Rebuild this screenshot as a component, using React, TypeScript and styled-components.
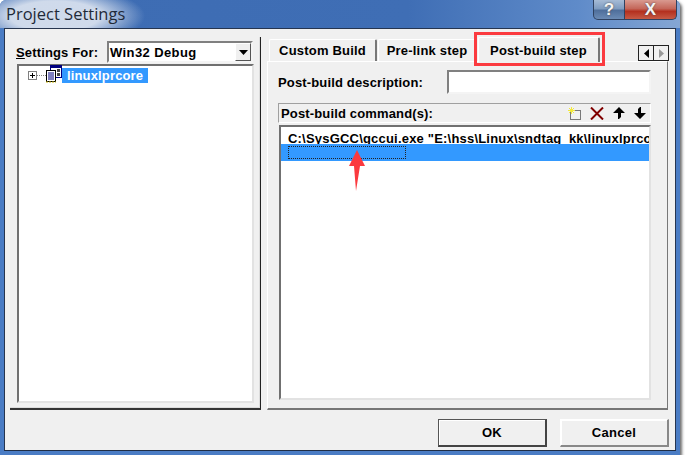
import styled, { createGlobalStyle } from 'styled-components';

const GlobalStyle = createGlobalStyle`
    html, body {
        margin: 0;
        padding: 0;
        background: #ffffff;
        overflow: hidden;
    }
    * {
        box-sizing: border-box;
    }
`;

const dialogFont = `"Liberation Sans", Arial, sans-serif`;

const Frame = styled.div`
    position: relative;
    width: 680px;
    height: 455px;
    display: flex;
    flex-direction: column;
    border-radius: 6px 6px 0 0;
    padding: 0 4px 4px 4px;
    background: #4a7cc4;
    box-shadow: 2px 2px 3px rgba(60, 60, 60, 0.75);
    font-family: ${dialogFont};
    color: #000000;
`;

const TitleBar = styled.div`
    height: 28px;
    margin: 0 -4px;
    padding-left: 6px;
    flex-shrink: 0;
    display: flex;
    justify-content: space-between;
    align-items: flex-start;
    border-radius: 6px 6px 0 0;
    background:
        radial-gradient(ellipse 90px 30px at 55px 16px, rgba(215, 224, 238, 0.95) 50%, rgba(215, 224, 238, 0) 100%),
        linear-gradient(90deg, #3d6cb3 0%, #3f6eb5 60%, #5f8bc9 85%, #85a6d4 100%);
`;

const TitleText = styled.div`
    font-family: "Open Sans", sans-serif;
    font-size: 16.5px;
    line-height: 28px;
    color: #1f2a38;
`;

const CaptionButtons = styled.div`
    display: flex;
    margin-right: 3px;
`;

const CaptionButton = styled.div<{ $close?: boolean }>`
    width: ${(p) => (p.$close ? 52 : 32)}px;
    height: 20px;
    display: flex;
    align-items: center;
    justify-content: center;
    border: 1px solid #2f4160;
    border-top: none;
    border-left-width: ${(p) => (p.$close ? 0 : 1)}px;
    border-radius: ${(p) => (p.$close ? '0 0 5px 0' : '0 0 0 5px')};
    font-family: ${dialogFont};
    font-weight: bold;
    color: #f4f4f4;
    font-size: ${(p) => (p.$close ? 17 : 17)}px;
    line-height: 19px;
    text-shadow: 0 0 2px #444444;
    background: ${(p) =>
        p.$close
            ? 'linear-gradient(180deg, #d99a90 0%, #c4675a 45%, #b4301f 60%, #c65a45 100%)'
            : 'linear-gradient(180deg, #a6bbd6 0%, #7f9cc0 45%, #4f6f9c 55%, #6b8bb5 100%)'};
`;

const Client = styled.div`
    flex: 1;
    display: flex;
    flex-direction: column;
    border: 1px solid #26354f;
    border-bottom-color: #1f2d45;
    background: #f0f0f0;
    padding: 8px 6px 0 5px;
`;

const Panes = styled.div`
    height: 373px;
    display: grid;
    grid-template-columns: 251px 401px;
    column-gap: 6px;
`;

const LeftPane = styled.div`
    display: flex;
    flex-direction: column;
    padding: 4px 7px 5px 6px;
    border-right: 1px solid #222222;
    border-bottom: 2px solid #333333;
    box-shadow: inset -1px -1px 0 #dcdcdc;
`;

const SettingsRow = styled.div`
    height: 22px;
    flex-shrink: 0;
    display: flex;
    align-items: center;
    justify-content: space-between;
`;

const FieldLabel = styled.label`
    font-size: 13px;
    font-weight: bold;
    letter-spacing: 0.15px;
    white-space: nowrap;
`;

const Sunken = styled.div`
    background: #ffffff;
    border: 2px solid;
    border-color: #808080 #f4f4f4 #f4f4f4 #808080;
`;

const Combo = styled(Sunken)`
    width: 146px;
    height: 22px;
    display: flex;
    align-items: center;
    justify-content: space-between;
    padding-left: 1px;
    font-size: 13px;
    font-weight: bold;
    letter-spacing: 0.4px;
`;

const ComboArrow = styled.div`
    width: 16px;
    height: 18px;
    display: flex;
    align-items: center;
    justify-content: center;
    background: #f0f0f0;
    border: 1px solid;
    border-color: #ffffff #555555 #555555 #ffffff;
`;

const Tree = styled(Sunken)`
    flex: 1;
    width: 237px;
    margin: 1px 0 0 1px;
    padding: 1px 0 0 9px;
    border-color: #707070 #e2e2e2 #e2e2e2 #707070;
`;

const TreeRow = styled.div`
    display: flex;
    align-items: center;
    height: 17px;
`;

const ExpandBox = styled.div`
    width: 9px;
    height: 9px;
    border: 1px solid #808080;
    background: #ffffff;
    position: relative;
    &::before {
        content: '';
        position: absolute;
        left: 1px;
        top: 3px;
        width: 5px;
        height: 1px;
        background: #000000;
    }
    &::after {
        content: '';
        position: absolute;
        left: 3px;
        top: 1px;
        width: 1px;
        height: 5px;
        background: #000000;
    }
`;

const TreeLine = styled.div`
    width: 9px;
    border-top: 1px dotted #808080;
`;

const ProjectIcon = styled.svg`
    flex-shrink: 0;
    margin-top: -3px;
`;

const TreeLabel = styled.span`
    height: 15px;
    padding: 0 5px;
    line-height: 15px;
    background: #3399ff;
    color: #ffffff;
    font-size: 13px;
    font-weight: bold;
    letter-spacing: 0.15px;
`;

const RightPane = styled.div`
    display: flex;
    flex-direction: column;
`;

const TabStrip = styled.div`
    height: 24px;
    flex-shrink: 0;
    display: flex;
    align-items: flex-end;
    padding-left: 2px;
    gap: 1px;
`;

const Tab = styled.div<{ $active?: boolean; $width: number }>`
    width: ${(p) => p.$width}px;
    height: ${(p) => (p.$active ? 25 : 22)}px;
    margin-bottom: ${(p) => (p.$active ? -1 : 0)}px;
    display: flex;
    align-items: center;
    justify-content: center;
    position: relative;
    z-index: ${(p) => (p.$active ? 2 : 0)};
    background: #f0f0f0;
    border-radius: 2px 2px 0 0;
    border-top: 1px solid #ffffff;
    border-left: 1px solid #ffffff;
    border-right: 2px solid #777777;
    font-size: 13px;
    font-weight: bold;
    letter-spacing: 0.2px;
    white-space: nowrap;
`;

const TabScroller = styled.div`
    display: flex;
    margin-left: auto;
    margin-right: -1px;
`;

const ScrollButton = styled.div`
    width: 16px;
    height: 16px;
    display: flex;
    align-items: center;
    justify-content: center;
    background: #f0f0f0;
    border: 1px solid #222222;
    & + & {
        margin-left: -1px;
    }
`;

const TabPage = styled.div`
    flex: 1;
    display: flex;
    flex-direction: column;
    padding: 8px 16px 8px 10px;
    border-top: 1px solid #ffffff;
    border-left: 1px solid #ffffff;
    border-right: 1px solid #777777;
    border-bottom: 2px solid #777777;
`;

const DescriptionRow = styled.div`
    height: 24px;
    flex-shrink: 0;
    display: flex;
    align-items: center;
    justify-content: space-between;
`;

const DescriptionInput = styled(Sunken)`
    width: 204px;
    height: 24px;
`;

const CommandHeader = styled.div`
    height: 20px;
    flex-shrink: 0;
    margin-top: 9px;
    display: flex;
    align-items: center;
    justify-content: space-between;
    padding: 0 4px 0 2px;
    border: 1px solid;
    border-color: #a0a0a0 #ffffff #ffffff #a0a0a0;
`;

const Toolbar = styled.div`
    display: flex;
    align-items: center;
    gap: 9px;
`;

const CommandList = styled(Sunken)`
    flex: 1;
    width: 372px;
    margin: 2px 0 0 1px;
    overflow: hidden;
    border-color: #707070 #e2e2e2 #e2e2e2 #707070;
`;

const CommandRow = styled.div<{ $selected?: boolean }>`
    height: 17px;
    display: flex;
    align-items: center;
    padding-left: 7px;
    font-size: 13px;
    font-weight: bold;
    letter-spacing: 0.2px;
    white-space: nowrap;
    overflow: hidden;
    padding-top: ${(p) => (p.$selected ? 0 : 5)}px;
    background: ${(p) => (p.$selected ? '#3399ff' : '#ffffff')};
`;

const FocusBox = styled.div`
    width: 118px;
    height: 13px;
    border: 1px dotted #222222;
`;

const Footer = styled.div`
    flex: 1;
    display: flex;
    justify-content: flex-end;
    gap: 13px;
    padding-top: 9px;
`;

const DialogButton = styled.button<{ $default?: boolean }>`
    width: 109px;
    height: 28px;
    padding: 0;
    background: #f0f0f0;
    font-family: ${dialogFont};
    font-size: 13px;
    font-weight: bold;
    letter-spacing: 0.3px;
    color: #000000;
    border-style: solid;
    border-width: 1px 2px 2px 1px;
    border-color: ${(p) =>
        p.$default ? '#555555 #444444 #444444 #555555' : '#ffffff #888888 #888888 #ffffff'};
    box-shadow: inset 1px 1px 0 #ffffff;
`;

// annotations painted on top of the screenshot
const RedHighlight = styled.div`
    position: absolute;
    left: 474px;
    top: 32px;
    width: 131px;
    height: 34px;
    border: 3px solid #fb3a3f;
    z-index: 5;
`;

const RedArrow = styled.svg`
    position: absolute;
    left: 345px;
    top: 146px;
    z-index: 5;
`;

function App() {
    return (
        <Frame>
            <GlobalStyle />
            <TitleBar>
                <TitleText>Project Settings</TitleText>
                <CaptionButtons>
                    <CaptionButton>?</CaptionButton>
                    <CaptionButton $close>X</CaptionButton>
                </CaptionButtons>
            </TitleBar>
            <Client>
                <Panes>
                    <LeftPane>
                        <SettingsRow>
                            <FieldLabel>
                                <u>S</u>ettings For:
                            </FieldLabel>
                            <Combo>
                                Win32 Debug
                                <ComboArrow>
                                    <svg width="9" height="5" viewBox="0 0 9 5">
                                        <polygon points="0,0 9,0 4.5,5" fill="#000" />
                                    </svg>
                                </ComboArrow>
                            </Combo>
                        </SettingsRow>
                        <Tree>
                            <TreeRow>
                                <ExpandBox />
                                <TreeLine />
                                <ProjectIcon width="16" height="18" viewBox="0 0 16 18">
                                    <rect x="4.5" y="0.5" width="11" height="12" fill="#fff" stroke="#000080" />
                                    <rect x="4" y="0" width="12" height="3" fill="#000080" />
                                    <rect x="11" y="4" width="3" height="3" fill="#444" />
                                    <rect x="11" y="8" width="3" height="3" fill="#444" />
                                    <rect x="0.5" y="5.5" width="9" height="11" fill="#fff" stroke="#000" />
                                    <path d="M2 8h6M2 10h6M2 12h6M2 14h6" stroke="#000080" />
                                    <path d="M0 17h10" stroke="#c8b400" strokeDasharray="2 1" />
                                </ProjectIcon>
                                <TreeLabel>linuxlprcore</TreeLabel>
                            </TreeRow>
                        </Tree>
                    </LeftPane>
                    <RightPane>
                        <TabStrip>
                            <Tab $width={108}>Custom Build</Tab>
                            <Tab $width={99}>Pre-link step</Tab>
                            <Tab $width={122} $active>
                                Post-build step
                            </Tab>
                            <TabScroller>
                                <ScrollButton>
                                    <svg width="5" height="9" viewBox="0 0 5 9">
                                        <polygon points="5,0 5,9 0,4.5" fill="#000" />
                                    </svg>
                                </ScrollButton>
                                <ScrollButton>
                                    <svg width="5" height="9" viewBox="0 0 5 9">
                                        <polygon points="0,0 0,9 5,4.5" fill="#999" />
                                    </svg>
                                </ScrollButton>
                            </TabScroller>
                        </TabStrip>
                        <TabPage>
                            <DescriptionRow>
                                <FieldLabel>Post-build description:</FieldLabel>
                                <DescriptionInput />
                            </DescriptionRow>
                            <CommandHeader>
                                <FieldLabel>Post-build command(s):</FieldLabel>
                                <Toolbar>
                                    <svg width="13" height="13" viewBox="0 0 13 13">
                                        <rect x="2.5" y="3.5" width="10" height="9" fill="none" stroke="#000" strokeDasharray="1 1" />
                                        <path d="M3.5 0v7M0 3.5h7M1 1l5 5M6 1l-5 5" stroke="#f2e93a" strokeWidth="1" />
                                    </svg>
                                    <svg width="14" height="13" viewBox="0 0 14 13">
                                        <path d="M1 0.5l12 12M13 0.5L1 12.5" stroke="#800000" strokeWidth="2" />
                                    </svg>
                                    <svg width="12" height="12" viewBox="0 0 12 12">
                                        <polygon points="6,0 12,6 8,6 8,10 6,12 5,12 5,6 0,6" fill="#000" />
                                    </svg>
                                    <svg width="12" height="12" viewBox="0 0 12 12">
                                        <polygon points="6,12 12,6 7,6 7,0 6,0 4,2 4,6 0,6" fill="#000" />
                                    </svg>
                                </Toolbar>
                            </CommandHeader>
                            <CommandList>
                                <CommandRow>C:\SysGCC\gccui.exe "E:\hss\Linux\sndtag_kk\linuxlprcore</CommandRow>
                                <CommandRow $selected>
                                    <FocusBox />
                                </CommandRow>
                            </CommandList>
                        </TabPage>
                    </RightPane>
                </Panes>
                <Footer>
                    <DialogButton $default>OK</DialogButton>
                    <DialogButton>Cancel</DialogButton>
                </Footer>
            </Client>
            <RedHighlight />
            <RedArrow width="24" height="46" viewBox="0 0 24 46">
                <polygon points="12,4 20,20 15,20 11,45 9,20 4,20" fill="#fb3a3f" />
            </RedArrow>
        </Frame>
    );
}

export default App;
